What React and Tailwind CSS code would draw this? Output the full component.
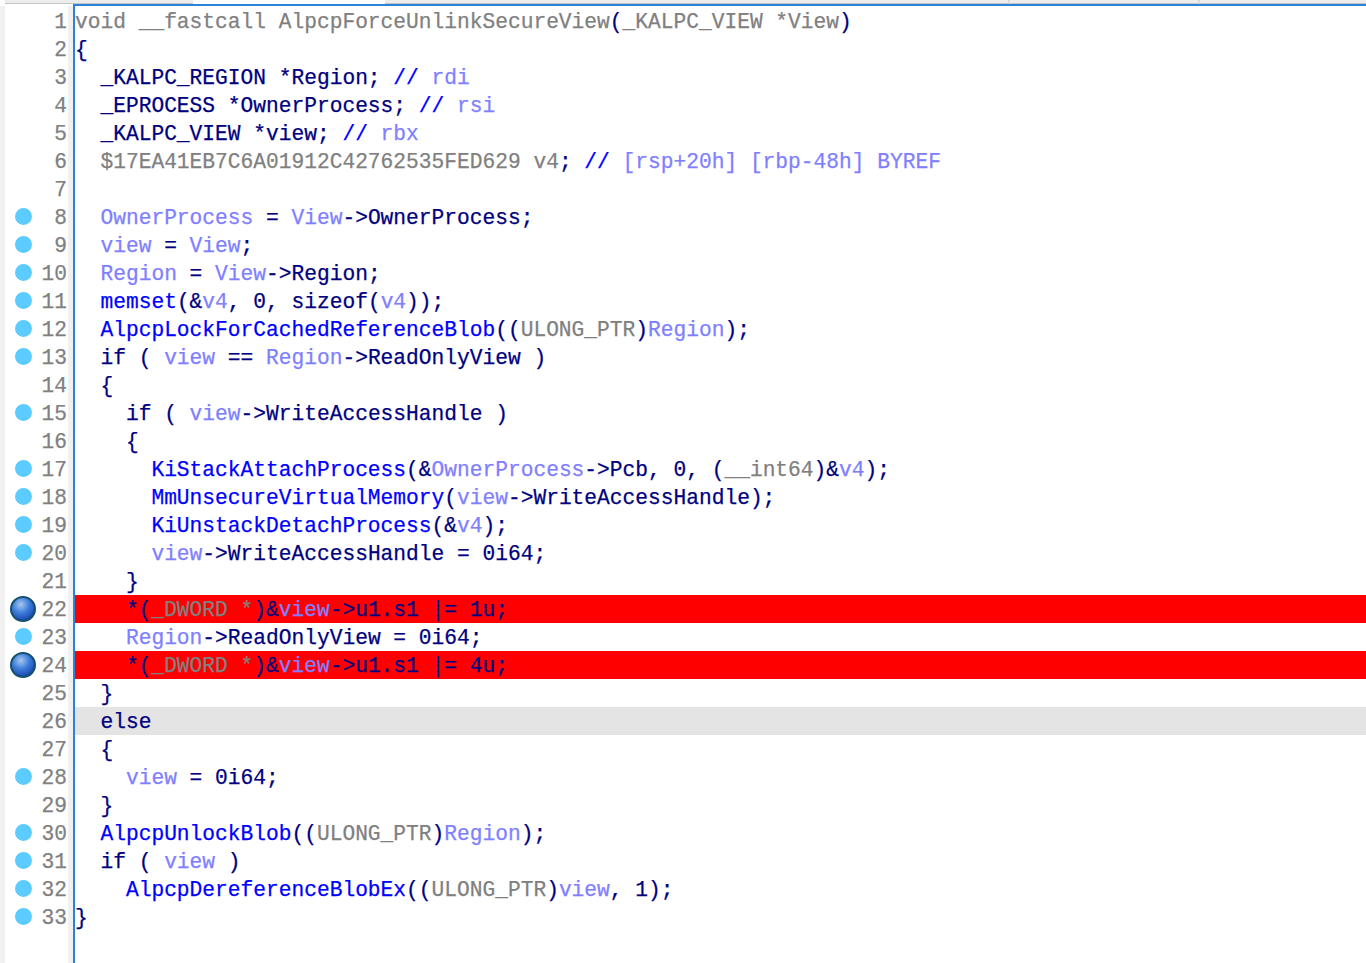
import React from "react";

const cls = {
  n: "text-[#000080]",
  g: "text-[#808080]",
  v: "text-[#8080ff]",
  b: "text-[#0000ff]",
};

const S = (c, t) => [c, t];
const lines = [
  { t: [S("g", "void __fastcall AlpcpForceUnlinkSecureView"), S("n", "("), S("g", "_KALPC_VIEW *View"), S("n", ")")] },
  { t: [S("n", "{")] },
  { t: [S("n", "  _KALPC_REGION *Region; "), S("b", "// "), S("v", "rdi")] },
  { t: [S("n", "  _EPROCESS *OwnerProcess; "), S("b", "// "), S("v", "rsi")] },
  { t: [S("n", "  _KALPC_VIEW *view; "), S("b", "// "), S("v", "rbx")] },
  { t: [S("g", "  $17EA41EB7C6A01912C42762535FED629 v4"), S("n", "; "), S("b", "// "), S("v", "[rsp+20h] [rbp-48h] BYREF")] },
  { t: [] },
  { d: 1, t: [S("n", "  "), S("v", "OwnerProcess"), S("n", " = "), S("v", "View"), S("n", "->OwnerProcess;")] },
  { d: 1, t: [S("n", "  "), S("v", "view"), S("n", " = "), S("v", "View"), S("n", ";")] },
  { d: 1, t: [S("n", "  "), S("v", "Region"), S("n", " = "), S("v", "View"), S("n", "->Region;")] },
  { d: 1, t: [S("b", "  memset"), S("n", "(&"), S("v", "v4"), S("n", ", 0, sizeof("), S("v", "v4"), S("n", "));")] },
  { d: 1, t: [S("b", "  AlpcpLockForCachedReferenceBlob"), S("n", "(("), S("g", "ULONG_PTR"), S("n", ")"), S("v", "Region"), S("n", ");")] },
  { d: 1, t: [S("n", "  if ( "), S("v", "view"), S("n", " == "), S("v", "Region"), S("n", "->ReadOnlyView )")] },
  { t: [S("n", "  {")] },
  { d: 1, t: [S("n", "    if ( "), S("v", "view"), S("n", "->WriteAccessHandle )")] },
  { t: [S("n", "    {")] },
  { d: 1, t: [S("b", "      KiStackAttachProcess"), S("n", "(&"), S("v", "OwnerProcess"), S("n", "->Pcb, 0, ("), S("g", "__int64"), S("n", ")&"), S("v", "v4"), S("n", ");")] },
  { d: 1, t: [S("b", "      MmUnsecureVirtualMemory"), S("n", "("), S("v", "view"), S("n", "->WriteAccessHandle);")] },
  { d: 1, t: [S("b", "      KiUnstackDetachProcess"), S("n", "(&"), S("v", "v4"), S("n", ");")] },
  { d: 1, t: [S("n", "      "), S("v", "view"), S("n", "->WriteAccessHandle = 0i64;")] },
  { t: [S("n", "    }")] },
  { d: 2, bg: "bg-[#ff0000]", t: [S("n", "    *("), S("g", "_DWORD *"), S("n", ")&"), S("v", "view"), S("n", "->u1.s1 |= 1u;")] },
  { d: 1, t: [S("n", "    "), S("v", "Region"), S("n", "->ReadOnlyView = 0i64;")] },
  { d: 2, bg: "bg-[#ff0000]", t: [S("n", "    *("), S("g", "_DWORD *"), S("n", ")&"), S("v", "view"), S("n", "->u1.s1 |= 4u;")] },
  { t: [S("n", "  }")] },
  { bg: "bg-[#e4e4e4]", t: [S("n", "  else")] },
  { t: [S("n", "  {")] },
  { d: 1, t: [S("n", "    "), S("v", "view"), S("n", " = 0i64;")] },
  { t: [S("n", "  }")] },
  { d: 1, t: [S("b", "  AlpcpUnlockBlob"), S("n", "(("), S("g", "ULONG_PTR"), S("n", ")"), S("v", "Region"), S("n", ");")] },
  { d: 1, t: [S("n", "  if ( "), S("v", "view"), S("n", " )")] },
  { d: 1, t: [S("b", "    AlpcpDereferenceBlobEx"), S("n", "(("), S("g", "ULONG_PTR"), S("n", ")"), S("v", "view"), S("n", ", 1);")] },
  { d: 1, t: [S("n", "}")] },
];

function Dot({ kind }) {
  if (kind === 1) return <span className="mb-[2px] w-[17px] h-[17px] rounded-full bg-[#5ccbff]" />;
  if (kind === 2)
    return (
      <span className="w-[26px] h-[26px] rounded-full border-2 border-[#14506f] bg-[radial-gradient(circle_at_40%_30%,#a9c8f0_0%,#3f7fdc_40%,#1240a8_85%)]" />
    );
  return null;
}

function GutterRow({ n, d }) {
  return (
    <div className="h-[28px] flex items-center">
      <div className="w-[36px] flex justify-center">
        <Dot kind={d} />
      </div>
      <div className="flex-1 pr-[1px] mt-[2px] text-right text-[#808080] leading-[28px]">{n}</div>
    </div>
  );
}

function CodeRow({ line }) {
  return (
    <div className={`h-[28px] leading-[30px] whitespace-pre ${line.bg || ""}`}>
      {line.t.map((s, i) => (
        <span key={i} className={cls[s[0]]}>
          {s[1]}
        </span>
      ))}
    </div>
  );
}

export default function App() {
  return (
    <div className="w-[1366px] h-[963px] overflow-hidden bg-white flex flex-col font-['Liberation_Mono',monospace] text-[21.23px] [-webkit-text-stroke:0.25px]">
      <div className="h-[4px] flex pl-[5px] shrink-0">
        <div className="w-[188px] bg-[#ececec] border-b border-[#c4c4c4]" />
        <div className="w-[192px] bg-white" />
        <div className="w-[625px] bg-[#ececec] border-b border-[#c4c4c4] border-r-2 border-r-[#dcdcdc]" />
        <div className="w-[190px] bg-[#ececec] border-b border-[#c4c4c4] border-r-2 border-r-[#dcdcdc]" />
        <div className="flex-1 bg-[#ececec] border-b border-[#c4c4c4]" />
      </div>
      <div className="h-[2px] ml-[73px] bg-[#2b82d9] shrink-0" />
      <div className="flex flex-1 min-h-0">
        <div className="w-[5px] bg-[#f0f0f0]" />
        <div className="w-[63px] pt-[1px]">
          {lines.map((l, i) => (
            <GutterRow key={i} n={i + 1} d={l.d} />
          ))}
        </div>
        <div className="w-[5px] bg-[#f0f0f0]" />
        <div className="w-[2px] bg-[#2b82d9]" />
        <div className="flex-1 pt-[1px] min-w-0">
          {lines.map((l, i) => (
            <CodeRow key={i} line={l} />
          ))}
        </div>
      </div>
    </div>
  );
}
